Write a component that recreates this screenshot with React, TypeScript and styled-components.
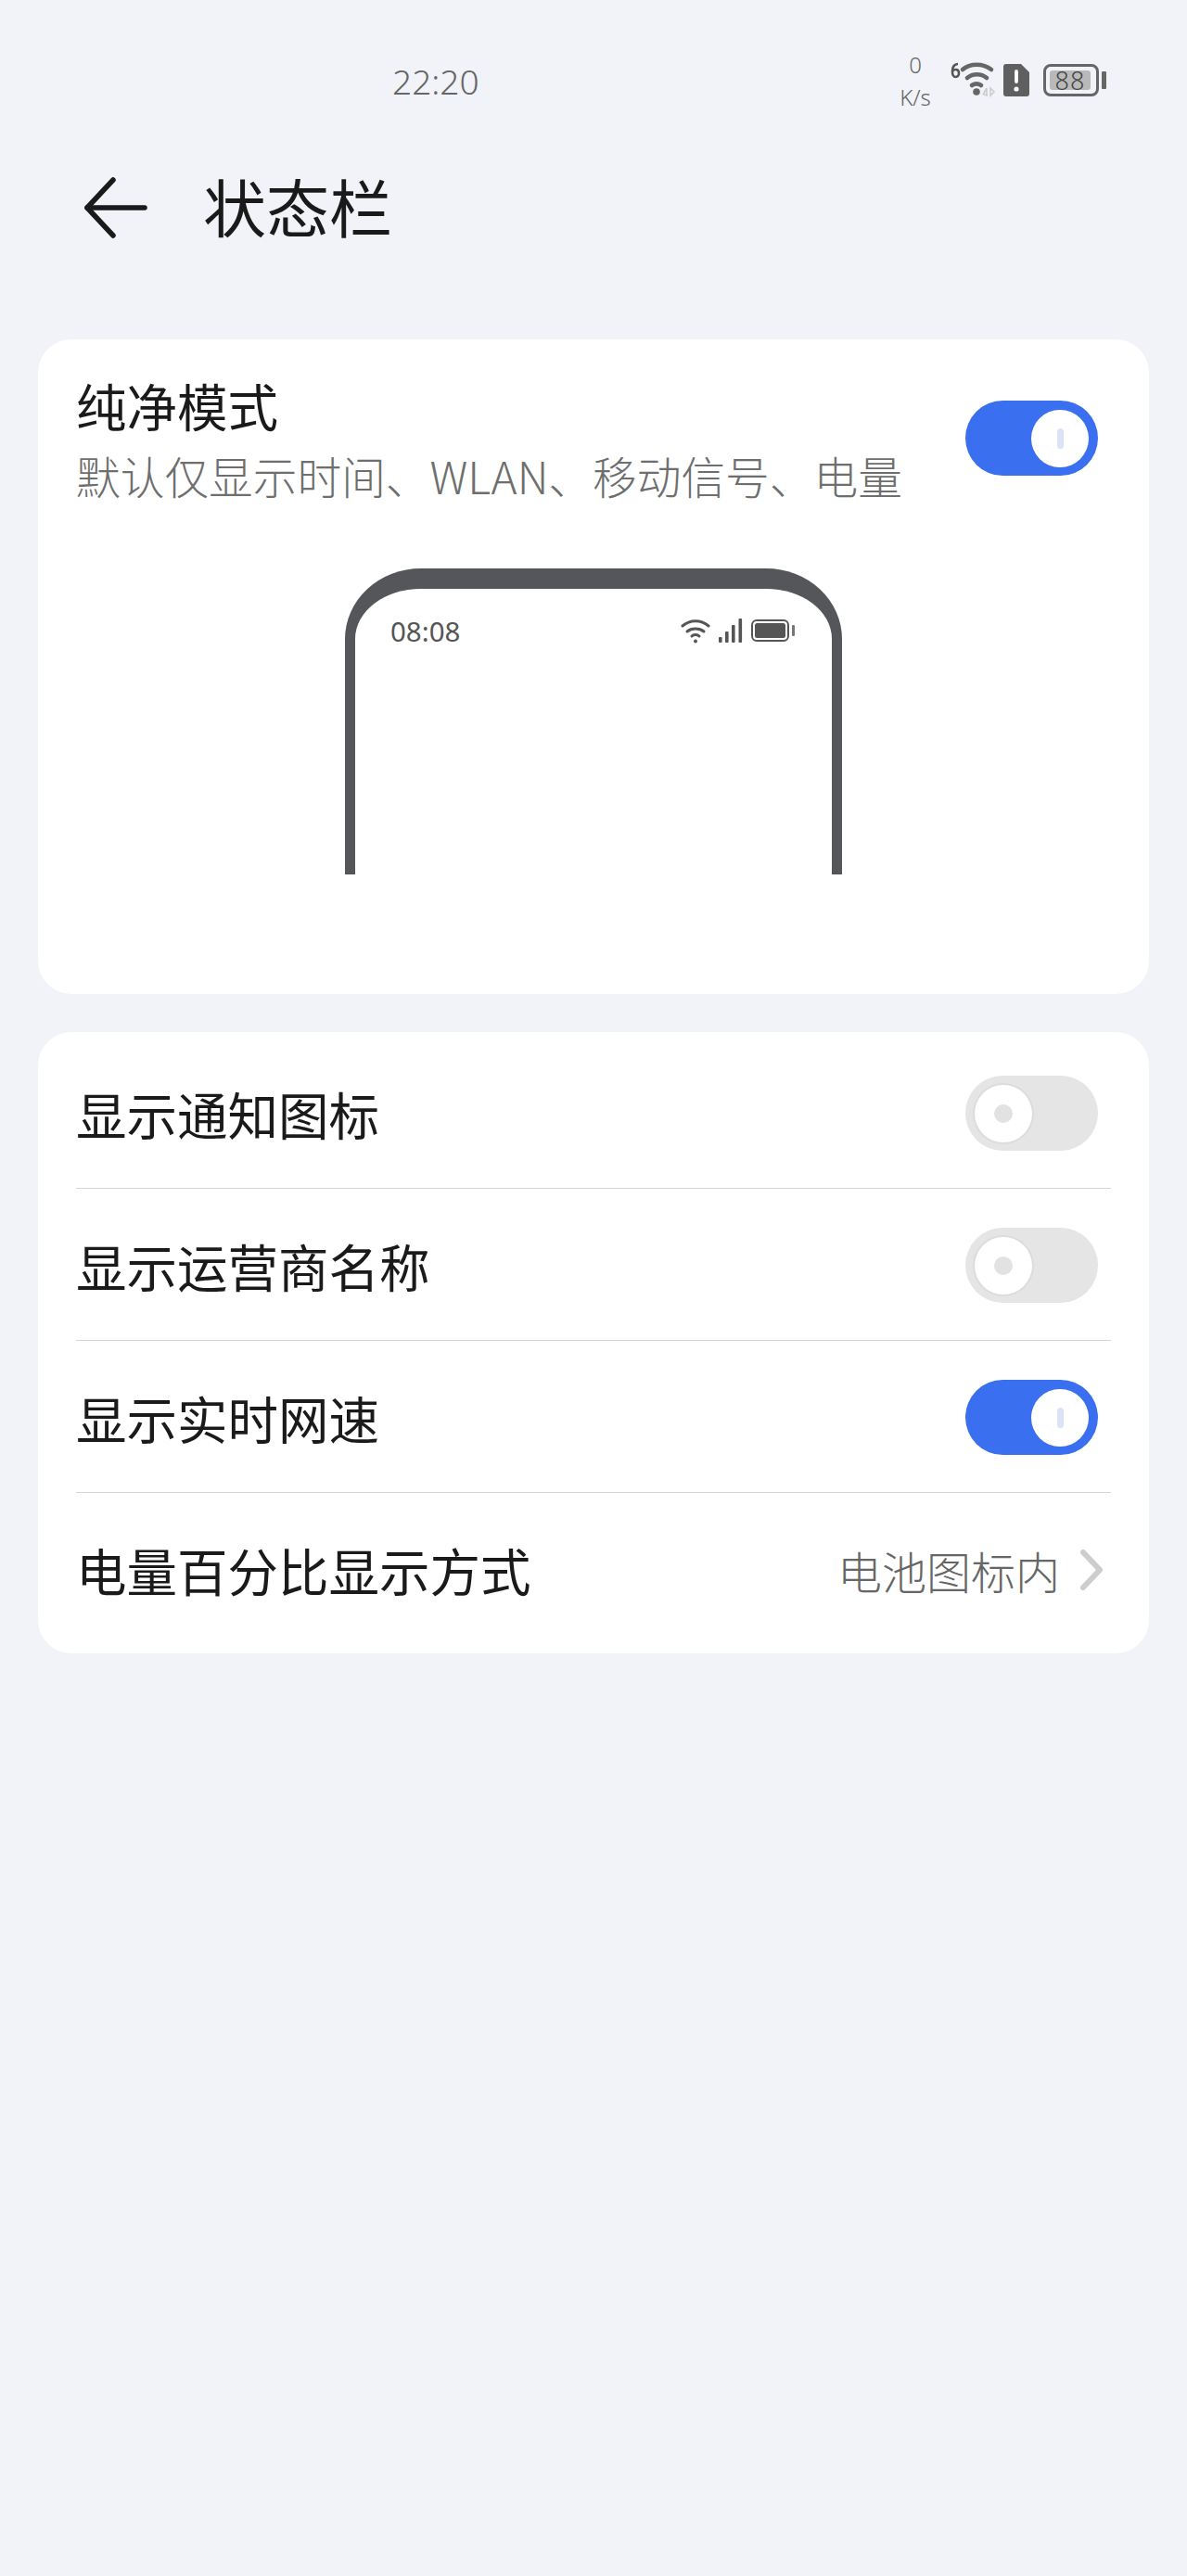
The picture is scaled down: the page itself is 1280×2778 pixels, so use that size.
import styled, { createGlobalStyle } from 'styled-components';

const GlobalStyle = createGlobalStyle`
    html, body {
        margin: 0;
        padding: 0;
        background-color: #f1f3f8;
    }
    * {
        box-sizing: border-box;
    }
`;

const Page = styled.div`
    width: 1280px;
    height: 2778px;
    padding: 0 41px;
    background-color: #f1f3f8;
    font-family: "Noto Sans CJK SC", "Noto Sans", sans-serif;
    overflow: hidden;
`;

const StatusBar = styled.div`
    display: flex;
    justify-content: space-between;
    height: 140px;
    padding: 60px 46px 0 382px;
`;

const Clock = styled.div`
    font-family: "Noto Sans", sans-serif;
    font-weight: 300;
    font-size: 37px;
    line-height: 56px;
    color: #666;
`;

const StatusIcons = styled.div`
    display: flex;
    align-items: flex-start;
`;

const NetSpeed = styled.div`
    display: flex;
    flex-direction: column;
    align-items: center;
    width: 36px;
    margin: -8px 20px 0 0;
    font-family: "Noto Sans", sans-serif;
    font-weight: 300;
    font-size: 24px;
    line-height: 35px;
    color: #666;
`;

const SmallIcon = styled.svg<{ $top: number; $left?: number }>`
    display: block;
    flex-shrink: 0;
    margin-top: ${ p => p.$top }px;
    margin-left: ${ p => p.$left || 0 }px;
`;

const BigBattery = styled.div`
    display: flex;
    align-items: center;
    margin: 9px 0 0 14px;
    gap: 3px;
`;

const BigBatteryBody = styled.div`
    width: 60px;
    height: 35px;
    padding: 4px;
    border: 3px solid #666;
    border-radius: 8px;
`;

const BigBatteryFill = styled.div`
    display: flex;
    align-items: center;
    justify-content: center;
    width: 44px;
    height: 100%;
    border-radius: 3px;
    background-color: #b9b9b9;
    font-family: "Noto Sans", sans-serif;
    font-weight: 300;
    font-size: 27px;
    letter-spacing: 1px;
    color: #444;
`;

const BigBatteryCap = styled.div`
    width: 5px;
    height: 19px;
    border-radius: 1px;
    background-color: #666;
`;

const Header = styled.div`
    display: flex;
    align-items: center;
    gap: 60px;
    height: 168px;
    margin-bottom: 58px;
    padding-left: 48px;
`;

const Title = styled.h1`
    margin: -4px 0 0;
    font-weight: 400;
    font-size: 68px;
    line-height: 80px;
    color: #1a1a1a;
`;

const Card = styled.div`
    background-color: #fff;
    border-radius: 36px;
    margin-bottom: 41px;
`;

const PureCard = styled(Card)`
    height: 706px;
    padding: 33px 55px 0 41px;
`;

const PureTop = styled.div`
    display: flex;
    justify-content: space-between;
    align-items: flex-start;
`;

const ToggleSlot = styled.div`
    margin-top: 33px;
`;

const PureTitle = styled.div`
    font-size: 54.500px;
    line-height: 76px;
    color: #1a1a1a;
`;

const PureSub = styled.div`
    font-weight: 300;
    font-size: 47.700px;
    line-height: 75px;
    color: #6e6e6e;
`;

const Track = styled.div<{ $on: boolean }>`
    display: flex;
    align-items: center;
    justify-content: ${ p => p.$on ? 'flex-end' : 'flex-start' };
    width: 143px;
    height: 81px;
    padding: 0 10px;
    border-radius: 41px;
    background-color: ${ p => p.$on ? '#3a6ff0' : '#e5e5e5' };
`;

const Knob = styled.div<{ $on: boolean }>`
    display: flex;
    align-items: center;
    justify-content: center;
    width: 62px;
    height: 62px;
    border-radius: 50%;
    background-color: #fff;
    box-shadow: ${ p => p.$on ? 'none' : '0 0 0 2px #dcdcdc' };
`;

const KnobBar = styled.div`
    width: 7px;
    height: 22px;
    border-radius: 4px;
    background-color: #dbe3f8;
`;

const KnobDot = styled.div`
    width: 20px;
    height: 20px;
    border-radius: 50%;
    background-color: #e2e2e2;
`;

const Phone = styled.div`
    width: 536px;
    height: 330px;
    margin: 63px 0 0 290px;
    padding: 22px 39px 0 38px;
    border-style: solid;
    border-color: #54565a;
    border-width: 22px 11px 0;
    border-top-left-radius: 82px 76px;
    border-top-right-radius: 82px 76px;
`;

const PhoneStatus = styled.div`
    display: flex;
    align-items: center;
    justify-content: space-between;
    height: 46px;
`;

const PhoneTime = styled.div`
    font-family: "Noto Sans", sans-serif;
    font-size: 29.500px;
    color: #555;
`;

const PhoneIcons = styled.div`
    display: flex;
    align-items: center;
    gap: 9px;
`;

const ListCard = styled(Card)`
    height: 670px;
    padding: 5px 41px 0;
`;

const Row = styled.div<{ $last?: boolean }>`
    display: flex;
    align-items: center;
    justify-content: space-between;
    height: 164px;
    padding: 2px 14px 0 0;
    border-bottom: ${ p => p.$last ? 'none' : '1.500px solid #d6d6d6' };
`;

const RowLabel = styled.div`
    font-size: 54.500px;
    line-height: 75px;
    margin-top: -1px;
    color: #1a1a1a;
`;

const RowValue = styled.div`
    display: flex;
    align-items: center;
    gap: 22px;
    margin-right: -3px;
    font-size: 48px;
    font-weight: 300;
    line-height: 75px;
    color: #666;
`;

const Toggle = ({ on }: { on: boolean }) => (
    <Track $on={ on }>
        <Knob $on={ on }>{ on ? <KnobBar /> : <KnobDot /> }</Knob>
    </Track>
);

const rows = [
    { label: '显示通知图标', on: false },
    { label: '显示运营商名称', on: false },
    { label: '显示实时网速', on: true },
];

const App = () => {
    return (
        <Page>
            <GlobalStyle />
            <StatusBar>
                <Clock>22:20</Clock>
                <StatusIcons>
                    <NetSpeed>
                        <span>0</span>
                        <span>K/s</span>
                    </NetSpeed>
                    <SmallIcon $top={ 6 } width="50" height="40" viewBox="0 0 50 40" fill="none">
                        <path d="M8 3C4 3 2 6 2 11s1.500 6 3.500 6S9 15.500 9 13s-1.500-4-3.500-4S2.500 10 2 11" stroke="#555" strokeWidth="2.600" />
                        <path d="M13 9c8-7 22-7 31 0" stroke="#666" strokeWidth="4.600" strokeLinecap="round" />
                        <path d="M18 18c6-5 15-5 21 0" stroke="#666" strokeWidth="4.600" strokeLinecap="round" />
                        <path d="M23 26c3-2 7-2 10 0" stroke="#666" strokeWidth="4.600" strokeLinecap="round" />
                        <circle cx="28" cy="33" r="3.800" fill="#666" />
                        <path d="M35 36h5M39 29l-4 7M39 29v9M43 29l4 4-4 4z" stroke="#ccc" strokeWidth="1.600" />
                    </SmallIcon>
                    <SmallIcon $top={ 8 } $left={ 6 } width="30" height="37" viewBox="0 0 30 37">
                        <path d="M4 1h16l9 9v23a3 3 0 0 1-3 3H4a3 3 0 0 1-3-3V4a3 3 0 0 1 3-3z" fill="#5f5f5f" />
                        <rect x="13.100" y="7" width="3.800" height="15" rx="1.900" fill="#fff" />
                        <circle cx="15" cy="28" r="2.600" fill="#fff" />
                    </SmallIcon>
                    <BigBattery>
                        <BigBatteryBody>
                            <BigBatteryFill>88</BigBatteryFill>
                        </BigBatteryBody>
                        <BigBatteryCap />
                    </BigBattery>
                </StatusIcons>
            </StatusBar>

            <Header>
                <svg width="68" height="66" viewBox="0 0 68 66" fill="none" stroke="#1a1a1a" strokeWidth="5.500" strokeLinecap="round" strokeLinejoin="round" style={{ flexShrink: 0, marginLeft: 2 }}>
                    <path d="M31 3 3 33l28 30" />
                    <path d="M3 33h62" />
                </svg>
                <Title>状态栏</Title>
            </Header>

            <PureCard>
                <PureTop>
                    <div>
                        <PureTitle>纯净模式</PureTitle>
                        <PureSub>默认仅显示时间、WLAN、移动信号、电量</PureSub>
                    </div>
                    <ToggleSlot>
                        <Toggle on />
                    </ToggleSlot>
                </PureTop>
                <Phone>
                    <PhoneStatus>
                        <PhoneTime>08:08</PhoneTime>
                        <PhoneIcons>
                            <svg width="32" height="27" viewBox="0 0 32 27" fill="none" stroke="#555" strokeWidth="3" strokeLinecap="round">
                                <path d="M2 8c8-7 20-7 28 0" />
                                <path d="M7 14c5-4 13-4 18 0" />
                                <path d="M12 19c2-2 6-2 8 0" />
                                <circle cx="16" cy="24.500" r="2" fill="#555" stroke="none" />
                            </svg>
                            <svg width="26" height="26" viewBox="0 0 26 26" fill="#555">
                                <rect x="0" y="20" width="3.600" height="6" rx="1" />
                                <rect x="7" y="14" width="3.600" height="12" rx="1" />
                                <rect x="14" y="7" width="3.600" height="19" rx="1" />
                                <rect x="21.500" y="0" width="3.600" height="26" rx="1" />
                            </svg>
                            <svg width="48" height="24" viewBox="0 0 48 24">
                                <rect x="1" y="1" width="39" height="22" rx="5" fill="none" stroke="#555" strokeWidth="2" />
                                <rect x="4" y="4" width="33" height="16" rx="2.500" fill="#555" />
                                <rect x="44" y="6" width="3" height="12" rx="1" fill="#777" />
                            </svg>
                        </PhoneIcons>
                    </PhoneStatus>
                </Phone>
            </PureCard>

            <ListCard>
                { rows.map( row => (
                    <Row key={ row.label }>
                        <RowLabel>{ row.label }</RowLabel>
                        <Toggle on={ row.on } />
                    </Row>
                )) }
                <Row $last>
                    <RowLabel>电量百分比显示方式</RowLabel>
                    <RowValue>
                        电池图标内
                        <svg width="24" height="44" viewBox="0 0 24 44" fill="none" stroke="#cdcdcd" strokeWidth="6" strokeLinecap="round" strokeLinejoin="round" style={{ marginRight: -2 }}>
                            <path d="M3 3l18 19L3 41" />
                        </svg>
                    </RowValue>
                </Row>
            </ListCard>
        </Page>
    );
};

export default App;
